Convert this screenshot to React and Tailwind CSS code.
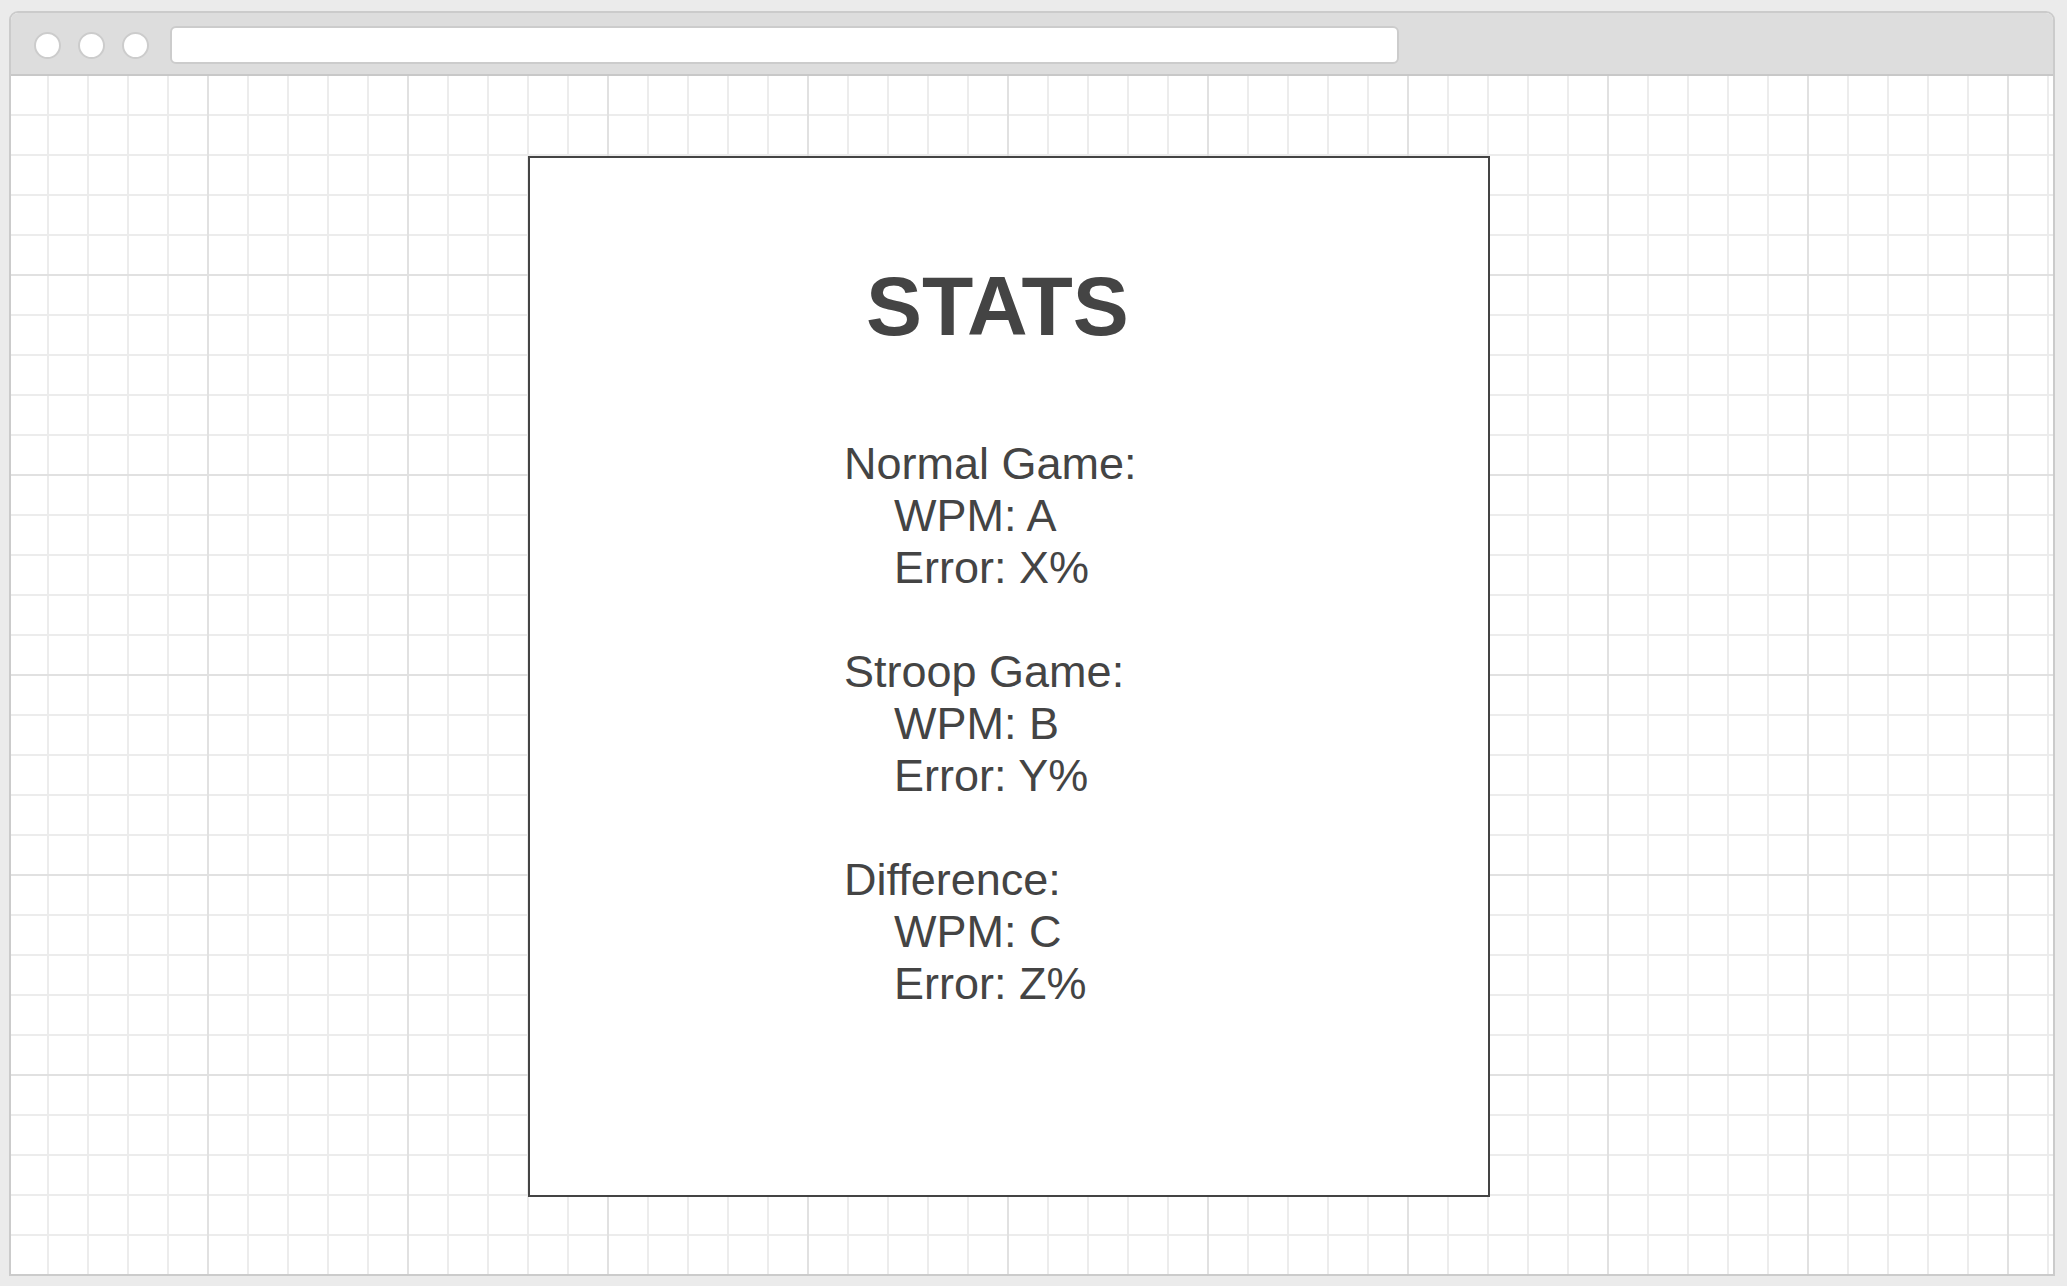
import React from 'react';

const groups = [
    { name: 'Normal Game:', wpm: 'A', error: 'X%' },
    { name: 'Stroop Game:', wpm: 'B', error: 'Y%' },
    { name: 'Difference:', wpm: 'C', error: 'Z%' },
];

const App = () => {
    return (
        <div className="h-screen w-full bg-[#ebebeb] pl-[9px] pt-[11px] pr-[12px] font-['Liberation_Sans',Arial,sans-serif]">
            {/* Browser window */}
            <div className="flex h-[1265px] flex-col overflow-hidden rounded-t-[9px] border-2 border-[#cbcbcb] bg-white">
                {/* Title bar */}
                <div className="flex h-[63px] shrink-0 items-center border-b-2 border-[#c8c8c8] bg-[#dddddd] pl-[23px] pt-[3px]">
                    <div className="flex gap-[17px]">
                        <span className="h-[27px] w-[27px] rounded-full border-2 border-[#cccccc] bg-white" />
                        <span className="h-[27px] w-[27px] rounded-full border-2 border-[#cccccc] bg-white" />
                        <span className="h-[27px] w-[27px] rounded-full border-2 border-[#cccccc] bg-white" />
                    </div>
                    <div className="ml-[21px] h-[38px] w-[1229px] rounded-[6px] border-2 border-[#cccccc] bg-white" />
                </div>

                {/* Grid canvas */}
                <div className="flex-1 bg-white pl-[517px] pt-[80px] bg-[linear-gradient(to_right,#e1e1e1_2px,transparent_2px),linear-gradient(to_bottom,#e1e1e1_2px,transparent_2px),linear-gradient(to_right,#ececec_2px,transparent_2px),linear-gradient(to_bottom,#ececec_2px,transparent_2px)] [background-size:200px_200px,200px_200px,40px_40px,40px_40px] [background-position:196px_198px,196px_198px,36px_38px,36px_38px]">
                    {/* Stats card */}
                    <div className="h-[1041px] w-[962px] border-2 border-[#444444] bg-white pt-[102px] text-[#444444]">
                        <h1 className="pl-[336px] text-[84px] font-bold leading-[92px]">STATS</h1>
                        <div className="mt-[86px] pl-[314px] text-[45px] leading-[52px]">
                            {groups.map((g, i) => (
                                <div key={g.name} className={i > 0 ? 'mt-[52px]' : ''}>
                                    <p>{g.name}</p>
                                    <p className="pl-[50px]">WPM: {g.wpm}</p>
                                    <p className="pl-[50px]">Error: {g.error}</p>
                                </div>
                            ))}
                        </div>
                    </div>
                </div>
            </div>
        </div>
    );
};

export default App;
